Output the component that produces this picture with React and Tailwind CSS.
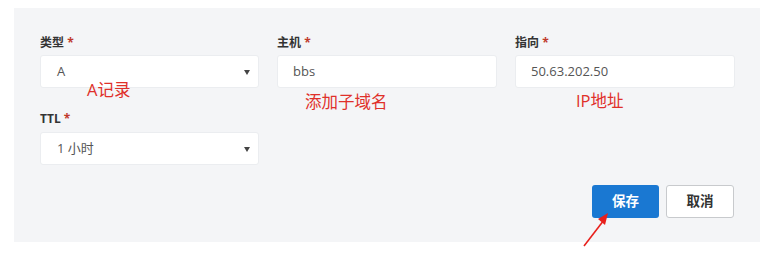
import React from "react";

const font = { fontFamily: '"Open Sans", "Noto Sans CJK SC", sans-serif' };

const Label = ({ children }) => (
  <div className="h-4 mb-[4px] text-[12px] leading-4 font-bold text-[#333]">
    {children} <span className="text-[#c0392b]">*</span>
  </div>
);

const Select = ({ value }) => (
  <div className="relative h-[33px] bg-white border border-[#ebedf0] rounded-[3px] flex items-center pl-[16px] text-[13px] text-[#555]">
    {value}
    <svg className="absolute right-[8px] top-[14px]" width="6" height="5" viewBox="0 0 6 5">
      <polygon points="0,0 6,0 3,5" fill="#444" />
    </svg>
  </div>
);

const Input = ({ value }) => (
  <div className="h-[33px] bg-white border border-[#ebedf0] rounded-[3px] flex items-center pl-[15px] text-[13px] text-[#555]">
    {value}
  </div>
);

const Note = ({ className, children }) => (
  <span className={`absolute text-[16.5px] leading-5 text-[#e0302a] ${className}`}>{children}</span>
);

export default function App() {
  return (
    <div className="w-[768px] h-[253px] bg-white pt-2 pl-[14px] relative" style={font}>
      <div className="w-[746px] h-[234px] bg-[#f4f5f7] pt-[27px] px-[26px] pb-6 flex flex-col">
        <div className="grid grid-cols-[219px_220px_220px] gap-x-[18px]">
          <div>
            <Label>类型</Label>
            <Select value="A" />
          </div>
          <div>
            <Label>主机</Label>
            <Input value="bbs" />
          </div>
          <div>
            <Label>指向</Label>
            <Input value="50.63.202.50" />
          </div>
        </div>
        <div className="mt-[23px] w-[219px]">
          <div className="h-4 mb-[5px] text-[12px] leading-4 font-bold text-[#333]">
            TTL <span className="text-[#c0392b]">*</span>
          </div>
          <Select value="1 小时" />
        </div>
        <div className="mt-[20px] flex justify-end gap-[7px]">
          <button className="w-[67px] h-[33px] bg-[#1a78d2] rounded-[3px] text-white text-[13.5px] font-bold">
            保存
          </button>
          <button className="w-[68px] h-[33px] bg-white border border-[#c8cacd] rounded-[3px] text-[#333] text-[13.5px] font-bold">
            取消
          </button>
        </div>
      </div>
      <Note className="left-[87px] top-[80px]">A记录</Note>
      <Note className="left-[305px] top-[92px]">添加子域名</Note>
      <Note className="left-[576px] top-[91px]">IP地址</Note>
      <svg className="absolute left-0 top-0" width="768" height="253" viewBox="0 0 768 253">
        <line x1="584" y1="246" x2="604" y2="220" stroke="#e8201c" strokeWidth="1.6" />
        <polygon points="608,213 598,219 605,225" fill="#e8201c" />
      </svg>
    </div>
  );
}
